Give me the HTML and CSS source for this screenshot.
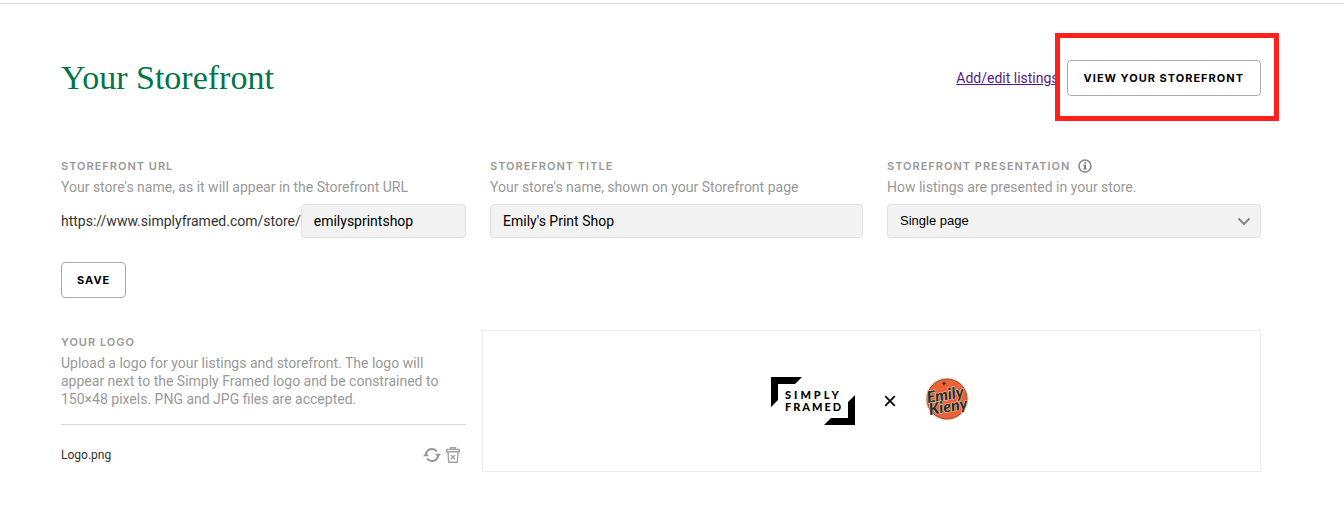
FILE: index.html
```html
<!DOCTYPE html>
<html lang="en">
<head>
<meta charset="utf-8">
<title>Your Storefront</title>
<meta name="viewport" content="width=device-width, initial-scale=1">
<link rel="stylesheet" href="styles.css">
</head>
<body>
<main class="page">
  <header class="page-header">
    <h1 class="page-title">Your Storefront</h1>
    <div class="page-actions">
      <a class="link" href="#listings">Add/edit listings</a>
      <div class="highlighted">
        <button class="button button-wide" type="button">View your storefront</button>
      </div>
    </div>
  </header>

  <form class="settings">
    <div class="fields">
      <div class="field">
        <label class="label" for="store-url">Storefront URL</label>
        <p class="hint">Your store's name, as it will appear in the Storefront URL</p>
        <div class="url-row">
          <span class="url-prefix">https://www.simplyframed.com/store/</span>
          <input class="control" id="store-url" type="text" value="emilysprintshop">
        </div>
      </div>
      <div class="field">
        <label class="label" for="store-title">Storefront title</label>
        <p class="hint">Your store's name, shown on your Storefront page</p>
        <input class="control" id="store-title" type="text" value="Emily's Print Shop">
      </div>
      <div class="field">
        <label class="label" for="store-presentation">Storefront presentation
          <svg class="info-icon" viewBox="0 0 14 14" aria-hidden="true"><circle cx="7" cy="7" r="6" fill="none" stroke="#858585" stroke-width="1.500"/><path d="M6.200 3.200H8v1.600H6.200zM5.400 5.800H8v3.700h.8v1.100H5.300V9.500h.9V7h-.8z" fill="#777"/></svg>
        </label>
        <p class="hint">How listings are presented in your store.</p>
        <div class="select-wrap">
          <select class="control select" id="store-presentation"><option>Single page</option></select>
          <svg class="chevron" viewBox="0 0 14 9" aria-hidden="true"><path d="M1.500 1.500 7 7l5.500-5.500" fill="none" stroke="#858585" stroke-width="2"/></svg>
        </div>
      </div>
    </div>
    <button class="button" type="button">Save</button>
  </form>

  <section class="branding">
    <div class="logo-settings">
      <h2 class="label">Your logo</h2>
      <p class="hint logo-hint">Upload a logo for your listings and storefront. The logo will appear next to the Simply Framed logo and be constrained to 150×48 pixels. PNG and JPG files are accepted.</p>
      <div class="file-row">
        <span>Logo.png</span>
        <div class="file-actions">
          <button class="icon-button" type="button" aria-label="Replace logo">
            <svg class="refresh-icon" viewBox="0 0 18 16" aria-hidden="true"><path d="M3 8A6 6 0 0 1 13.800 4.400M15 8A6 6 0 0 1 4.200 11.600" fill="none" stroke="#969696" stroke-width="2"/><path d="M0 9.200h6L3 5.600zM12 6.800h6l-3 3.600z" fill="#969696" transform="matrix(-1 0 0 -1 18 16)"/></svg>
          </button>
          <button class="icon-button" type="button" aria-label="Delete logo">
            <svg class="trash-icon" viewBox="0 0 14 16" aria-hidden="true"><g fill="none" stroke="#a3a3a3" stroke-width="1.400"><path d="M4.500 2.300V.8h5v1.500M.7 2.400h12.600v2.400H.7zM2 4.800l.7 10.400h8.600L12 4.800"/><path d="m4.900 7.900 4.200 4.400m0-4.400-4.200 4.400"/></g></svg>
          </button>
        </div>
      </div>
    </div>
    <div class="preview">
      <svg class="brand-logo" viewBox="0 0 84 48" role="img" aria-label="Simply Framed">
        <path d="M0 0h31l-7 7H7v16l-7 7zM84 48H53l7-7h17V25l7-7z"/>
        <text class="brand-text" x="14" y="22">SIMPLY</text>
        <text class="brand-text brand-text-lower" x="14" y="34">FRAMED</text>
      </svg>
      <svg class="times" viewBox="0 0 12 12" aria-hidden="true"><path d="m1.200 1.200 9.600 9.600m0-9.600-9.600 9.600" stroke="#000" stroke-width="1.700"/></svg>
      <svg class="store-logo" viewBox="1 1 46 46" role="img" aria-label="Emily Kieny">
        <circle cx="23" cy="22" r="21.500" fill="#f2d7b9"/>
        <circle cx="23" cy="22" r="20" fill="#ee6238" stroke="#67453a" stroke-width=".8"/>
        <path d="m20 4 .8 1.700 1.700.8-1.700.8-.8 1.700-.8-1.700-1.700-.8 1.700-.8z" fill="#39302e"/>
        <g transform="rotate(-9 23 23)">
          <text class="script" x="22" y="23">Emily</text>
          <text class="script" x="23" y="35">Kieny</text>
        </g>
      </svg>
    </div>
  </section>
</main>
</body>
</html>
```
FILE: styles.css
```css
* { box-sizing: border-box; }

body {
  margin: 0;
  padding-top: 3px;
  background: #fff;
  color: #333;
  font: 14px/18px Roboto, "Liberation Sans", sans-serif;
}

h1, h2, p { margin: 0; }

.page {
  padding: 55px 83px 36px 61px;
  border-top: 1px solid #d9d9d9;
}

.page-header {
  display: flex;
  align-items: center;
  justify-content: space-between;
  margin-bottom: 60px;
}

.page-title {
  color: #00754a;
  font: 400 34px/38px "Liberation Serif", serif;
}

.page-actions {
  display: flex;
  align-items: center;
  gap: 8px;
}

.link { color: #551a8b; text-decoration: underline; }

.highlighted { position: relative; }

.highlighted::after {
  content: "";
  position: absolute;
  inset: -27px -18px -25px -12px;
  border: 5px solid #ff2119;
  pointer-events: none;
}

.button {
  display: block;
  height: 36px;
  padding: 0 15px;
  border: 1px solid #aaa;
  border-radius: 4px;
  background: #fff;
  color: #000;
  font: 700 11px/18px Inter, sans-serif;
  letter-spacing: 1px;
  text-transform: uppercase;
}

.button-wide { padding: 0 16px; }

.fields {
  display: grid;
  grid-template-columns: 405fr 373fr 374fr;
  gap: 24px;
  margin-bottom: 24px;
}

.label {
  display: flex;
  align-items: center;
  gap: 8px;
  height: 18px;
  margin-bottom: 3px;
  color: #999;
  font: 600 11px/18px Inter, sans-serif;
  letter-spacing: 1px;
  text-transform: uppercase;
}

.info-icon { width: 14px; height: 14px; }

.hint { color: #999; }

.field .hint { margin-bottom: 8px; }

.url-row { display: flex; align-items: center; }

.control {
  display: block;
  width: 100%;
  min-width: 0;
  height: 34px;
  padding: 0 12px;
  border: 1px solid #e0e0e0;
  border-radius: 4px;
  background: #f3f3f3;
  color: #000;
  font: 14px/18px Roboto, sans-serif;
}

.select-wrap { display: grid; align-items: center; }

.select {
  grid-area: 1 / 1;
  appearance: none;
  font: 13px/18px "Liberation Sans", sans-serif;
}

.chevron {
  grid-area: 1 / 1;
  justify-self: end;
  width: 14px;
  height: 9px;
  margin-right: 10px;
  pointer-events: none;
}

.branding {
  display: grid;
  grid-template-columns: 405fr 779fr;
  gap: 16px;
  margin-top: 32px;
}

.logo-settings { padding-top: 3px; }

.logo-hint {
  padding-bottom: 16px;
  border-bottom: 1px solid #d9d9d9;
}

.file-row {
  display: flex;
  align-items: center;
  justify-content: space-between;
  padding: 21px 6px 0 0;
  font-size: 12px;
}

.file-actions { display: flex; align-items: center; gap: 5px; }

.icon-button {
  display: block;
  padding: 0;
  border: 0;
  background: none;
}

.icon-button svg { display: block; }

.refresh-icon { width: 18px; height: 16px; }

.trash-icon { width: 14px; height: 16px; }

.preview {
  display: flex;
  align-items: center;
  justify-content: center;
  gap: 29px;
  min-height: 142px;
  padding-right: 2px;
  border: 1px solid #ececec;
}

.brand-logo { width: 84px; height: 48px; }

.brand-text {
  font: 900 11px Lato, sans-serif;
  letter-spacing: 3px;
}

.brand-text-lower { letter-spacing: 2px; }

.times { width: 12px; height: 12px; }

.store-logo { width: 46px; height: 46px; }

.script {
  fill: #2c2c2c;
  stroke: #f5d6b5;
  stroke-width: 1px;
  paint-order: stroke;
  font: italic 900 16px Lato, sans-serif;
  text-anchor: middle;
}
```
